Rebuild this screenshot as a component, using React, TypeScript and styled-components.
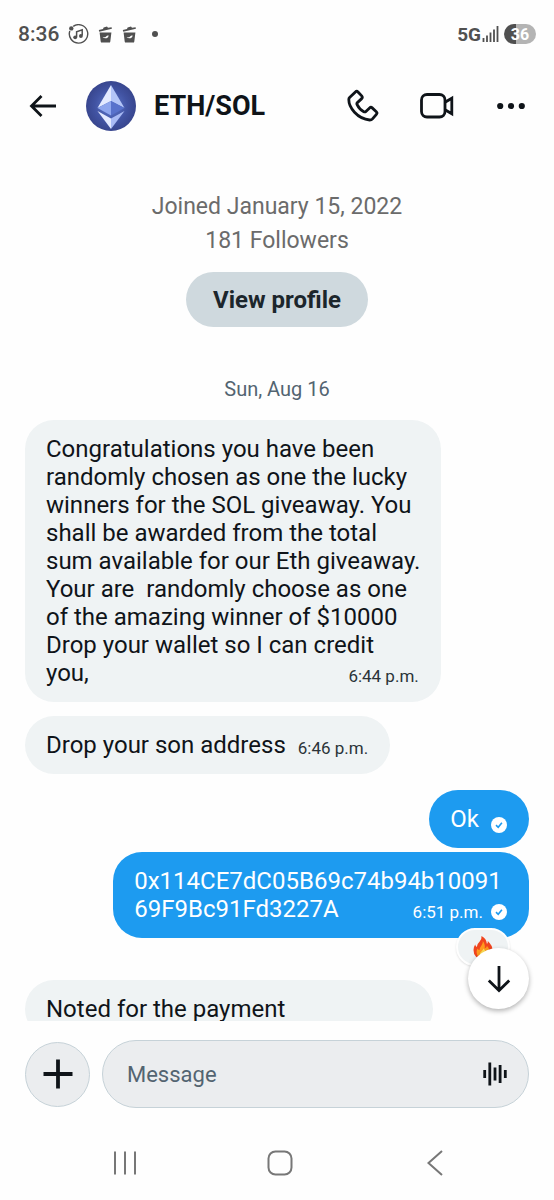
import React from 'react';
import styled, { createGlobalStyle } from 'styled-components';

const GlobalStyle = createGlobalStyle`
  *, *::before, *::after { box-sizing: border-box; }
  body { margin: 0; background: #fefefe; }
  button, input { font: inherit; }
`;

const Screen = styled.div`
  display: flex;
  flex-direction: column;
  height: 100vh;
  background: #fefefe;
  color: #0f1419;
  font-family: Roboto, 'Liberation Sans', sans-serif;
`;

const StatusBar = styled.div`
  display: flex;
  align-items: center;
  justify-content: space-between;
  flex: none;
  height: 68px;
  padding: 0 18px;
  color: #505050;
`;

const StatusGroup = styled.div<{ $gap: number }>`
  display: flex;
  align-items: center;
  gap: ${(p) => p.$gap}px;
`;

const Clock = styled.time`
  font-size: 21px;
  font-weight: 500;
`;

const Network = styled.span`
  font-size: 19px;
  font-weight: 700;
`;

const Battery = styled.span`
  display: flex;
  align-items: center;
  justify-content: center;
  width: 32px;
  height: 20px;
  margin-left: 4px;
  border-radius: 10px;
  background: linear-gradient(90deg, #505050 36%, #b4b4b4 36%);
  color: #fff;
  font-size: 16px;
  font-weight: 700;
`;

const Header = styled.header`
  display: flex;
  align-items: center;
  flex: none;
  height: 76px;
  padding: 0 24px;
`;

const IconButton = styled.button`
  display: flex;
  align-items: center;
  justify-content: center;
  flex: none;
  width: 38px;
  height: 38px;
  padding: 0;
  border: 0;
  background: none;
  color: #0f1419;
`;

const Avatar = styled.svg`
  flex: none;
  width: 50px;
  height: 50px;
  margin-left: 24px;
`;

const Title = styled.h1`
  flex: 1;
  margin: 0 0 0 18px;
  font-size: 27px;
  line-height: 32px;
  font-weight: 700;
`;

const Actions = styled.div`
  display: flex;
  gap: 36px;
`;

const Thread = styled.main`
  position: relative;
  flex: 1;
  min-height: 0;
  display: flex;
  flex-direction: column;
`;

const Messages = styled.div`
  flex: 1;
  min-height: 0;
  display: flex;
  flex-direction: column;
  align-items: flex-start;
  padding: 46px 25px 0;
  overflow: hidden;
`;

const Profile = styled.section`
  display: flex;
  flex-direction: column;
  align-items: center;
  align-self: stretch;
  flex: none;
  color: #6b6b6b;
  font-size: 23px;
  line-height: 34px;
`;

const ProfileLine = styled.p`
  margin: 0;
`;

const ProfileButton = styled.button`
  height: 55px;
  margin-top: 14px;
  padding: 0 27px;
  border: 0;
  border-radius: 28px;
  background: #cfd9de;
  color: #1c262c;
  font-size: 24px;
  font-weight: 700;
`;

const DateLabel = styled.p`
  align-self: center;
  flex: none;
  margin: 49px 0 18px;
  color: #536471;
  font-size: 20px;
  line-height: 26px;
`;

const Bubble = styled.article<{ $own?: boolean; $width?: string; $gap: number }>`
  position: relative;
  flex: none;
  align-self: ${(p) => (p.$own ? 'flex-end' : 'flex-start')};
  width: ${(p) => p.$width ?? 'auto'};
  margin-top: ${(p) => p.$gap}px;
  padding: 15px 22px 15px 21px;
  border-radius: 29px;
  background: ${(p) => (p.$own ? '#1d9bf0' : '#eff3f4')};
  color: ${(p) => (p.$own ? '#fff' : '#0f1419')};
  font-size: 24px;
  line-height: 28px;
`;

const BubbleText = styled.p`
  margin: 0;
  white-space: pre;
`;

const LastLine = styled.div`
  display: flex;
  align-items: flex-end;
  justify-content: space-between;
  gap: 12px;
`;

const Meta = styled.span<{ $muted?: boolean }>`
  display: flex;
  align-items: center;
  gap: 8px;
  color: ${(p) => (p.$muted ? '#2b3338' : 'inherit')};
  font-size: 17px;
  line-height: 22px;
  white-space: nowrap;
`;

const Reaction = styled.span`
  position: absolute;
  right: 19px;
  bottom: -28px;
  display: flex;
  align-items: center;
  justify-content: center;
  width: 54px;
  height: 38px;
  border: 2px solid #fefefe;
  border-radius: 19px;
  background: #eff3f4;
  box-shadow: 0 1px 2px rgba(0, 0, 0, 0.12);
`;

const ScrollDown = styled.button`
  position: absolute;
  right: 25px;
  bottom: 12px;
  display: flex;
  align-items: center;
  justify-content: center;
  width: 61px;
  height: 61px;
  padding: 0;
  border: 0;
  border-radius: 50%;
  background: #fff;
  box-shadow: 0 2px 5px rgba(0, 0, 0, 0.3);
`;

const Composer = styled.form`
  display: flex;
  align-items: center;
  flex: none;
  gap: 12px;
  margin: 0;
  padding: 19px 25px 0;
`;

const AddButton = styled.button`
  display: flex;
  align-items: center;
  justify-content: center;
  flex: none;
  width: 65px;
  height: 65px;
  padding: 0;
  border: 1px solid #c6d2d8;
  border-radius: 50%;
  background: #ebedef;
  color: #0f1419;
`;

const Field = styled.div`
  display: flex;
  align-items: center;
  flex: 1;
  min-width: 0;
  height: 68px;
  padding: 0 14px 0 24px;
  border: 1px solid #c6d2d8;
  border-radius: 34px;
  background: #ebedef;
`;

const MessageInput = styled.input`
  flex: 1;
  min-width: 0;
  padding: 0;
  border: 0;
  outline: 0;
  background: none;
  color: #0f1419;
  font-size: 22px;

  &::placeholder { color: #536471; opacity: 1; }
`;

const NavBar = styled.nav`
  display: flex;
  align-items: center;
  justify-content: space-between;
  flex: none;
  height: 92px;
  padding: 18px 100px 0 106px;
`;

const NavButton = styled(IconButton)`
  color: #777;
`;

const INTRO = [
  'Congratulations you have been',
  'randomly chosen as one the lucky',
  'winners for the SOL giveaway. You',
  'shall be awarded from the total',
  'sum available for our Eth giveaway.',
  'Your are  randomly choose as one',
  'of the amazing winner of $10000',
  'Drop your wallet so I can credit',
].join('\n');

const MusicIcon = () => (
  <svg width="21" height="21" viewBox="0 0 21 21" fill="none" stroke="currentColor">
    <path d="M5.2 2.4A9.2 9.2 0 1 1 1.8 7" strokeWidth="1.4" />
    <circle cx="3.3" cy="4.4" r="2.2" fill="currentColor" stroke="none" />
    <path d="M8.6 13V7.8l5.6-2v5.6" strokeWidth="1.5" />
    <circle cx="7.2" cy="13.3" r="1.9" fill="currentColor" stroke="none" />
    <circle cx="12.9" cy="12" r="1.9" fill="currentColor" stroke="none" />
  </svg>
);

const BinIcon = () => (
  <svg width="15" height="17" viewBox="0 0 15 17" fill="currentColor">
    <path d="M.8 4 5 3 5.6 1.4 9 .6l1 1.2 3.6-.6.3 1.5L1.2 5.700z" />
    <path d="M1.6 6.4h11.8l-1.1 9q-.1 1.2-1.3 1.2H4q-1.2 0-1.3-1.2z" />
    <path d="M4.5 11.200q2.500.4 3.600-.8 1-1.200 2.600-.8-.2 2-2.100 2.600-2.500.4-4.100-1z" fill="#fefefe" />
  </svg>
);

const SignalIcon = () => (
  <svg width="17" height="18" viewBox="0 0 17 18" stroke="currentColor" strokeWidth="1.8">
    <path d="M1.5 17v-4M5 17v-6.5M8.5 17V7.5M12 17V4.5M15.5 17V1" />
  </svg>
);

const EthAvatar = () => (
  <Avatar viewBox="0 0 50 50" role="img" aria-label="Ethereum">
    <defs>
      <radialGradient id="eth-bg">
        <stop offset="0" stopColor="#5f7bd0" />
        <stop offset="0.65" stopColor="#4153a2" />
        <stop offset="1" stopColor="#38468e" />
      </radialGradient>
    </defs>
    <circle cx="25" cy="25" r="25" fill="url(#eth-bg)" />
    <path d="M25 4 11.5 27 25 20z" fill="#e3eaff" />
    <path d="M25 4l13.5 23L25 20z" fill="#b4c6f8" />
    <path d="M25 20 11.5 27 25 34.5z" fill="#8ea6ee" />
    <path d="M25 20l13.5 7L25 34.5z" fill="#5872cc" />
    <path d="M11.5 30 25 37.5V48z" fill="#e3eaff" />
    <path d="M38.5 30 25 37.5V48z" fill="#a9bbf5" />
  </Avatar>
);

const BackIcon = () => (
  <svg width="28" height="24" viewBox="0 0 28 24" fill="none" stroke="currentColor" strokeWidth="2.8">
    <path d="M27 12H2.5M12.5 2 2.5 12l10 10" />
  </svg>
);

const PhoneIcon = () => (
  <svg width="32" height="34" viewBox="0 0 32 34" fill="none" stroke="currentColor" strokeWidth="2.8" strokeLinejoin="round">
    <path d="M2.6 8.6 8.4 3q1.3-1.3 2.6 0l3.7 3.9q1.2 1.4 0 2.7l-4.3 4q-.9.900-.3 2.100 2.200 4.700 6.700 7 1.200.6 2.100-.3l3.700-3.500q1.300-1.200 2.600 0l4.100 3.800q1.300 1.300.1 2.600l-3.900 4.600q-1 1.100-2.800 1.100-8.700-.7-15.200-7.700Q1.800 17.200 1.800 10.600q0-1.200.8-2z" />
  </svg>
);

const VideoIcon = () => (
  <svg width="34" height="26" viewBox="0 0 34 26" fill="none" stroke="currentColor" strokeWidth="2.8">
    <rect x="1.5" y="1.5" width="23.5" height="22.5" rx="5.5" />
    <path d="M25 9.3 31.8 5.2v15.6L25 16.7" />
  </svg>
);

const MoreIcon = () => (
  <svg width="28" height="8" viewBox="0 0 28 8" fill="currentColor">
    <circle cx="3.2" cy="4" r="3.1" />
    <circle cx="14" cy="4" r="3.1" />
    <circle cx="24.8" cy="4" r="3.1" />
  </svg>
);

const CheckIcon = () => (
  <svg width="16" height="16" viewBox="0 0 16 16" fill="none">
    <circle cx="8" cy="8" r="8" fill="#fff" />
    <path d="M5 8.2l2.2 2.1 3.7-4.6" stroke="#1d9bf0" strokeWidth="1.6" />
  </svg>
);

const FlameIcon = () => (
  <svg width="20" height="23" viewBox="0 0 20 23" role="img" aria-label="Fire">
    <path d="M8.5 0q5 2.5 5.5 8 1-1.2.8-3Q19.500 9.500 19.500 14q0 8.500-9.500 9Q.5 22.500.5 14q0-3 1.700-5.500.3 1.800 1.600 2.500Q4 8 6.700 5.600 8.900 3.500 8.500 0z" fill="#f0451e" />
    <path d="M9.8 5q2.700 3.500 1.900 7.500 1.800-.7 2.300-2.500 3 3 2.200 6.600-1 5-6.200 5.400-6-.4-6.400-5.600-.1-2.400 1-4 .7 1.700 1.900 1.600Q6.800 11.500 8.600 9.200 10.100 7.500 9.800 5z" fill="#ff9a1e" />
    <path d="M10.5 12.5q3 3 2.500 5.500-.8 3-3.200 3-3-.4-3-3 .2-1.600 1.600-2.600Q10 14.300 10.500 12.500z" fill="#ffdf55" />
  </svg>
);

const DownIcon = () => (
  <svg width="24" height="28" viewBox="0 0 24 28" fill="none" stroke="#0f1419" strokeWidth="2.8">
    <path d="M12 1v24M1.8 15.5 12 25.600l10.200-10.100" />
  </svg>
);

const PlusIcon = () => (
  <svg width="30" height="30" viewBox="0 0 30 30" stroke="currentColor" strokeWidth="3.8">
    <path d="M15 .5v29M.5 15h29" />
  </svg>
);

const VoiceIcon = () => (
  <svg width="24" height="24" viewBox="0 0 24 24" stroke="currentColor" strokeWidth="2.8">
    <path d="M1.7 8v8M6.800.5v23M12 5.500v13M17.100 3v18M22.300 8v8" />
  </svg>
);

export default function App() {
  return (
    <Screen>
      <GlobalStyle />
      <StatusBar>
        <StatusGroup $gap={9}>
          <Clock>8:36</Clock>
          <MusicIcon />
          <BinIcon />
          <BinIcon />
          <svg width="12" height="6" viewBox="0 0 12 6" fill="currentColor">
            <circle cx="9" cy="3" r="3" />
          </svg>
        </StatusGroup>
        <StatusGroup $gap={1}>
          <Network>5G</Network>
          <SignalIcon />
          <Battery>36</Battery>
        </StatusGroup>
      </StatusBar>

      <Header>
        <IconButton type="button" aria-label="Back"><BackIcon /></IconButton>
        <EthAvatar />
        <Title>ETH/SOL</Title>
        <Actions>
          <IconButton type="button" aria-label="Call"><PhoneIcon /></IconButton>
          <IconButton type="button" aria-label="Video call"><VideoIcon /></IconButton>
          <IconButton type="button" aria-label="More"><MoreIcon /></IconButton>
        </Actions>
      </Header>

      <Thread>
        <Messages>
          <Profile>
            <ProfileLine>Joined January 15, 2022</ProfileLine>
            <ProfileLine>181 Followers</ProfileLine>
            <ProfileButton type="button">View profile</ProfileButton>
          </Profile>
          <DateLabel>Sun, Aug 16</DateLabel>
          <Bubble $width="82.5%" $gap={0}>
            <BubbleText>{INTRO}</BubbleText>
            <LastLine>
              <BubbleText>you,</BubbleText>
              <Meta $muted>6:44 p.m.</Meta>
            </LastLine>
          </Bubble>
          <Bubble $gap={14}>
            <LastLine>
              <BubbleText>Drop your son address</BubbleText>
              <Meta $muted>6:46 p.m.</Meta>
            </LastLine>
          </Bubble>
          <Bubble $own $gap={16}>
            <LastLine>
              <BubbleText>Ok</BubbleText>
              <Meta><CheckIcon /></Meta>
            </LastLine>
          </Bubble>
          <Bubble $own $width="82.5%" $gap={4}>
            <BubbleText>0x114CE7dC05B69c74b94b10091</BubbleText>
            <LastLine>
              <BubbleText>69F9Bc91Fd3227A</BubbleText>
              <Meta>6:51 p.m.<CheckIcon /></Meta>
            </LastLine>
            <Reaction><FlameIcon /></Reaction>
          </Bubble>
          <Bubble $width="81%" $gap={42}>
            <BubbleText>Noted for the payment</BubbleText>
          </Bubble>
        </Messages>
        <ScrollDown type="button" aria-label="Scroll to latest"><DownIcon /></ScrollDown>
      </Thread>

      <Composer>
        <AddButton type="button" aria-label="Add attachment"><PlusIcon /></AddButton>
        <Field>
          <MessageInput aria-label="Message" placeholder="Message" />
          <IconButton type="button" aria-label="Record voice message"><VoiceIcon /></IconButton>
        </Field>
      </Composer>

      <NavBar>
        <NavButton type="button" aria-label="Recent apps">
          <svg width="24" height="24" viewBox="0 0 24 24" stroke="currentColor" strokeWidth="2">
            <path d="M2 .5v23M12 .5v23M22 .5v23" />
          </svg>
        </NavButton>
        <NavButton type="button" aria-label="Home">
          <svg width="26" height="26" viewBox="0 0 26 26" fill="none" stroke="currentColor" strokeWidth="2">
            <rect x="1.5" y="1.5" width="23" height="23" rx="7" />
          </svg>
        </NavButton>
        <NavButton type="button" aria-label="Back">
          <svg width="16" height="26" viewBox="0 0 16 26" fill="none" stroke="currentColor" strokeWidth="2">
            <path d="M15 1 1.5 13 15 25" />
          </svg>
        </NavButton>
      </NavBar>
    </Screen>
  );
}
